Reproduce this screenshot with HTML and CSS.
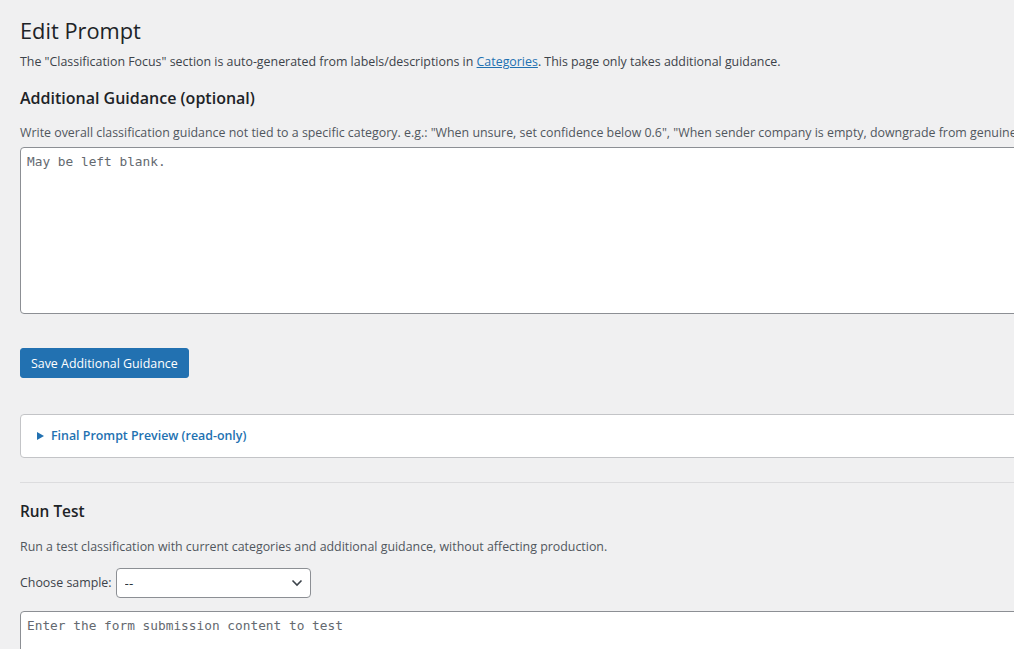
FILE: index.html
```html
<!DOCTYPE html>
<html lang="en">
<head>
    <meta charset="UTF-8">
    <meta name="viewport" content="width=device-width, initial-scale=1.0">
    <title>Edit Prompt</title>
    <link rel="stylesheet" href="styles.css">
</head>
<body>

    <div class="wrap">
        <h1>Edit Prompt</h1>
        <p class="intro">The "Classification Focus" section is auto-generated from labels/descriptions in <a href="#">Categories</a>. This page only takes additional guidance.</p>

        <h2>Additional Guidance (optional)</h2>
        <p class="description guidance-desc">Write overall classification guidance not tied to a specific category. e.g.: "When unsure, set confidence below 0.6", "When sender company is empty, downgrade from genuine inquiry to other"</p>
        <textarea class="code-area guidance" placeholder="May be left blank."></textarea>

        <p class="submit">
            <button class="button-primary">Save Additional Guidance</button>
        </p>

        <details class="preview">
            <summary>Final Prompt Preview (read-only)</summary>
        </details>

        <hr>

        <h2 class="test-title">Run Test</h2>
        <p class="description">Run a test classification with current categories and additional guidance, without affecting production.</p>

        <p class="sample-row">
            <label for="sample">Choose sample:</label>
            <span class="select-box">
                <select id="sample">
                    <option>--</option>
                </select>
                <svg class="chevron" width="14" height="14" viewBox="0 0 14 14"><path d="M2.5 4.5 L7 9 L11.5 4.5" fill="none" stroke="#3c434a" stroke-width="1.6"/></svg>
            </span>
        </p>

        <textarea class="code-area test-input" placeholder="Enter the form submission content to test"></textarea>
    </div>

</body>
</html>
```

FILE: styles.css
```css
html, body {
    margin: 0;
    padding: 0;
    overflow: hidden;
}
body {
    background: #f0f0f1;
    color: #3c434a;
    font-family: "Open Sans", "Noto Sans", sans-serif;
    font-size: 12.4px;
    line-height: 1.45;
}
.wrap {
    width: 1300px;
    padding: 0 0 0 20px;
}
h1 {
    font-size: 21.8px;
    font-weight: 400;
    color: #1d2327;
    line-height: 1.3;
    margin: 0;
    padding: 17px 0 4px;
}
.intro {
    margin: 4px 0 0;
    color: #3c434a;
}
.intro a {
    color: #2271b1;
}
h2 {
    font-size: 16px;
    font-weight: 600;
    color: #1d2327;
    margin: 17px 0 0;
    line-height: 1.3;
}
.description {
    color: #50575e;
    margin: 16px 0 0;
    white-space: nowrap;
}
.guidance-desc {
    margin-top: 15px;
}
.code-area {
    display: block;
    box-sizing: border-box;
    width: 1100px;
    border: 1px solid #8c8f94;
    border-radius: 4px;
    background: #fff;
    font-family: "DejaVu Sans Mono", "Liberation Mono", monospace;
    font-size: 12.8px;
    line-height: 1.5;
    padding: 4px 6px;
    resize: none;
    margin: 5px 0 0;
}
.code-area::placeholder {
    color: #646970;
}
.guidance {
    height: 167px;
}
.submit {
    margin: 34px 0 0;
}
.button-primary {
    background: #2271b1;
    color: #fff;
    border: 1px solid #2271b1;
    border-radius: 3px;
    font-family: inherit;
    font-size: 12.4px;
    height: 30px;
    padding: 0 10px;
    cursor: pointer;
}
.preview {
    margin: 36px 0 0;
    width: 1100px;
    height: 44px;
    box-sizing: border-box;
    background: #fff;
    border: 1px solid #c3c4c7;
    border-radius: 4px;
    padding: 0 16px;
}
.preview summary {
    line-height: 42px;
    color: #2271b1;
    font-weight: 600;
    cursor: pointer;
    list-style: none;
}
.preview summary::before {
    content: "";
    display: inline-block;
    width: 0;
    height: 0;
    border-left: 7px solid #2271b1;
    border-top: 4px solid transparent;
    border-bottom: 4px solid transparent;
    margin-right: 7px;
}
hr {
    border: 0;
    border-top: 1px solid #dcdcde;
    margin: 24px 0 0;
    width: 1100px;
}
.test-title {
    font-size: 15.4px;
    margin-top: 19px;
}
.sample-row {
    display: flex;
    align-items: center;
    gap: 4px;
    margin: 12px 0 0;
}
.select-box {
    position: relative;
    display: inline-block;
}
.select-box select {
    appearance: none;
    width: 195px;
    height: 30px;
    border: 1px solid #8c8f94;
    border-radius: 4px;
    background: #fff;
    color: #2c3338;
    font-family: inherit;
    font-size: 13.5px;
    padding: 0 24px 0 8px;
}
.chevron {
    position: absolute;
    right: 7px;
    top: 8px;
    pointer-events: none;
}
.test-input {
    height: 120px;
    margin-top: 13px;
}
```
